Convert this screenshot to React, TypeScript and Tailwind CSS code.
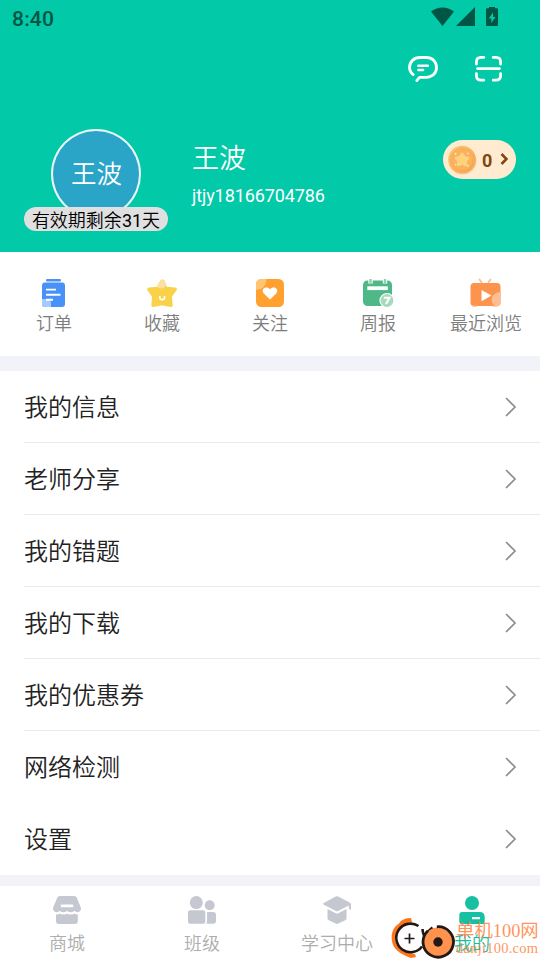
import React from 'react'

const menuRows = ['我的信息', '老师分享', '我的错题', '我的下载', '我的优惠券', '网络检测', '设置']

function StatusBar() {
    return (
        <div className="flex h-9 items-center justify-between pl-3 pr-[42px] text-[#005544]">
            <span className="pt-0.5 font-['Roboto',sans-serif] text-[21px] font-medium leading-9 tracking-[0.2px]">8:40</span>
            <svg width="68" height="20" viewBox="0 0 68 20" fill="currentColor" className="-mt-0.5">
                <path d="M1 4.6Q12.5-3.6 24 4.6L12.5 19Z" />
                <path d="M26 19 45 0V19Z" />
                <path fillRule="evenodd" d="M59 0h6v1.2h2Q68 1.2 68 2.4V18Q68 19 67 19H57Q56 19 56 18V2.4Q56 1.2 57 1.2h2ZM63 5.5l-4.3 6h2.6V16l4.2-6H63Z" />
            </svg>
        </div>
    )
}

function ChatIcon() {
    return (
        <svg width="30" height="27" viewBox="0 0 30 27" fill="none" stroke="#fff" strokeWidth="2.8" strokeLinecap="round" strokeLinejoin="round">
            <path d="M5.2 18.6C2.8 16.8 1.5 14.4 1.5 11.6 1.5 5.8 6 1.5 12 1.5h6.2c6 0 10.3 4.2 10.3 10s-4.3 9.8-10.3 9.8H11.5L8.8 24.6" />
            <path d="M10.3 9.7h9.6M10.3 14h4.8" strokeWidth="2.4" />
        </svg>
    )
}

function ScanIcon() {
    return (
        <svg width="27" height="26" viewBox="0 0 27 26" fill="none" stroke="#fff" strokeWidth="2.8" strokeLinecap="round">
            <path d="M8.8 1.4H6Q1.4 1.4 1.4 6v2M18.2 1.4H21q4.6 0 4.6 4.6v2M8.8 24.2H6q-4.6 0-4.6-4.6v-2M18.2 24.2H21q4.6 0 4.6-4.6v-2" />
            <path d="M2.5 12.6h22" strokeWidth="2.6" />
        </svg>
    )
}

function CoinIcon() {
    return (
        <svg width="30" height="30" viewBox="0 0 30 30">
            <defs>
                <linearGradient id="coin" x1="0" y1="0" x2="1" y2="1">
                    <stop offset="0" stopColor="#ffc774" />
                    <stop offset="1" stopColor="#f9a144" />
                </linearGradient>
            </defs>
            <circle cx="14.6" cy="15.8" r="13.8" fill="#eecb9c" />
            <circle cx="14" cy="14.5" r="13.8" fill="url(#coin)" />
            <circle cx="14" cy="14.5" r="11.2" fill="#fab160" stroke="#eda654" strokeWidth=".6" />
            <path d="m14 9.2 2 3.3 3.8.7-2.6 2.8.6 3.8-3.8-1.7-3.7 1.7.5-3.8-2.6-2.8 3.8-.7Z" fill="#ffd27c" stroke="#ffd27c" strokeWidth="3" strokeLinejoin="round" />
            <path d="M6.5 8.8h2M7.5 7.8v2M19.2 8.5h1.6M20 7.7v1.6M6.8 19.6h1.6M7.6 18.8v1.6M19 20.8h1.8M19.9 19.9v1.8" stroke="#ffe6b4" />
        </svg>
    )
}

function Header() {
    return (
        <header className="h-[252px] bg-[#02c9a7]">
            <StatusBar />
            <div className="flex justify-end gap-[37px] pr-[38px] pt-5">
                <ChatIcon />
                <ScanIcon />
            </div>
            <div className="flex pl-6 pr-6 pt-[46px]">
                <div className="flex w-36 flex-col items-center">
                    <div className="flex size-[90px] items-center justify-center rounded-full border-2 border-white/90 bg-[#2aa5c8] pb-[3px] pl-px text-[25.5px] text-white">王波</div>
                    <div className="relative -mt-3 flex h-6 w-full items-center justify-center rounded-full bg-[#e0e0e0] text-[18px] text-black">
                        有效期剩余<span className="pt-0.5 font-['Roboto',sans-serif] font-normal">31</span>天
                    </div>
                </div>
                <div className="ml-6 flex-1 pt-2 text-white">
                    <div className="text-[27px] leading-[40px]">王波</div>
                    <div className="mt-1.5 font-['Roboto',sans-serif] text-[18px] font-normal leading-[26px] tracking-[-0.1px]">jtjy18166704786</div>
                </div>
                <div className="mt-[11px] flex h-[39px] w-[73px] items-center rounded-full bg-[#ffecd0] pl-[5px] text-[#834511]">
                    <CoinIcon />
                    <span className="ml-1 pt-0.5 font-['Roboto',sans-serif] text-[18px] font-bold leading-none">0</span>
                    <svg width="8" height="12" viewBox="0 0 8 12" fill="none" stroke="currentColor" strokeWidth="2.6" className="-mt-0.5 ml-2">
                        <path d="m1.5 1 5 5-5 5" />
                    </svg>
                </div>
            </div>
        </header>
    )
}

const shortcuts = [
    {
        label: '订单',
        icon: (
            <>
                <rect x="7" y="0" width="15" height="2.6" rx="1.3" fill="#4791f8" />
                <rect x="3" y="3.5" width="23" height="24.5" rx="3" fill="#4791f8" />
                <path d="M3 20h4.5q4.5 0 4.5 4.5V28H6q-3 0-3-3Z" fill="#a6cafd" />
                <path d="M7 10.6h10M7 15.7h14.5M7 20.7h7" stroke="#fff" strokeWidth="1.9" />
            </>
        ),
    },
    {
        label: '收藏',
        icon: (
            <>
                <path d="m15 2.5 4.2 7 9 .8-5 7 .8 9-9-1.7-9 1.7.8-9-5-7 9-.8Z" fill="#f9d24a" stroke="#f9d24a" strokeWidth="3.4" strokeLinejoin="round" />
                <path d="M10.2 8Q12.4-.2 15.8.2q2 .4 3.3 4.2-.6 4.8-4.5 5-3.6 0-4.4-1.4Z" fill="#fbe0a0" />
                <path d="M12.8 17v1.2a2.4 2.4 0 0 0 4.8 0V17" fill="none" stroke="#fff" strokeWidth="1.6" />
            </>
        ),
    },
    {
        label: '关注',
        icon: (
            <>
                <rect x="1" y="0" width="28" height="28" rx="5.5" fill="#ffa02f" />
                <path d="M1 11V5.5Q1 0 6.5 0h5Q11 10.5 1 11Z" fill="#ffc474" />
                <path d="m15 20.5-6-5.8c-4.2-5 2.8-8.4 6-4.4 3.2-4 10.2-.6 6 4.4Z" fill="#fff" />
            </>
        ),
    },
    {
        label: '周报',
        icon: (
            <>
                <rect x="0" y="1.5" width="29" height="25.5" rx="4.5" fill="#4eb886" />
                <path d="M7.5 0v4.5M22 0v4.5" stroke="#fff" strokeWidth="4.4" />
                <path d="M7.5 0v4M22 0v4" stroke="#91d1b2" strokeWidth="2.4" />
                <path d="M4.3 9.2h20.5" stroke="#fff" strokeWidth="3.8" />
                <circle cx="24" cy="21.5" r="7" fill="#a5dabf" stroke="#fff" strokeWidth="1.2" />
                <path d="M20.8 18.7h5.8L23 25" fill="none" stroke="#fff" strokeWidth="2" />
            </>
        ),
    },
    {
        label: '最近浏览',
        icon: (
            <>
                <path d="m8.100 0 2.8 3.7M19.9 0l-2.8 3.7" stroke="#fcba90" strokeWidth="1.8" />
                <rect x="-.5" y="4" width="30" height="23" rx="3.5" fill="#fc944d" />
                <path d="M1.5 26.5H6v1.2H1.5ZM21.5 26.5h5v1.2h-5Z" fill="#fcba90" />
                <path d="M29.5 13q-8.8.8-8.8 8.2 0 3.200 3 5.8H26q3.5 0 3.5-3.5Z" fill="#fdbd95" />
                <path d="M10.5 11v11.2l10-5.6Z" fill="#fff" />
            </>
        ),
    },
]

function Shortcuts() {
    return (
        <nav className="grid h-[104px] grid-cols-5 bg-white pt-[27px]">
            {shortcuts.map((item) => (
                <div key={item.label} className="flex flex-col items-center">
                    <svg width="30" height="30" viewBox="0 0 30 30" className="overflow-visible">{item.icon}</svg>
                    <span className="text-[18px] leading-[26px] text-[#7d7d7d]">{item.label}</span>
                </div>
            ))}
        </nav>
    )
}

function MenuList() {
    return (
        <ul className="mt-[15px] bg-white pl-6">
            {menuRows.map((label, i) => (
                <li key={label} className={`flex h-[72px] items-center justify-between pr-6 text-[24px] text-[#222] ${i < 5 ? 'border-b border-[#e9e9ec]' : ''}`}>
                    <span className="pb-0.5 leading-9">{label}</span>
                    <svg width="11" height="20" viewBox="0 0 11 20" fill="none" stroke="#8f8f8f" strokeWidth="1.7">
                        <path d="m1 1 9 9-9 9" />
                    </svg>
                </li>
            ))}
        </ul>
    )
}

const tabs = [
    {
        label: '商城',
        icon: (
            <>
                <path fillRule="evenodd" d="M7 0h14q2 0 2.8 1.8L28 12q0 4-3.5 4.2-1.8 0-3.2-1.4-1.5 1.6-3.6 1.5-2.2 0-3.7-1.5-1.5 1.6-3.7 1.5-2.1 0-3.6-1.5-1.4 1.5-3.2 1.4Q0 16 0 12L4.2 1.8Q5 0 7 0Zm.8 8.4v2.8h12.4V8.4Z" />
                <path d="M3 18.3q2 .5 3.6-.8 1.8 1.3 3.7.8 2 .5 3.7-.8 1.8 1.3 3.7.8 2 .5 3.7-.8 1.6 1.3 3.4.8V25q0 3-3 3H6q-3 0-3-3Z" />
            </>
        ),
    },
    {
        label: '班级',
        icon: (
            <>
                <circle cx="8.3" cy="6.6" r="6.5" />
                <circle cx="21.7" cy="9.3" r="5" />
                <rect x="0" y="14.2" width="17.3" height="13.6" rx="2.6" />
                <path d="M18.8 16H25q3 0 3 3v6q0 2.8-3 2.8h-6.8q.9-1.2.9-3V18q0-1.2-.3-2Z" />
            </>
        ),
    },
    {
        label: '学习中心',
        icon: (
            <>
                <path d="M12.8.5q1.2-.6 2.4 0L27 6.8q1 .5 1 1.5V14l-2.2-1.2V9.6L15 15q-1 .5-2 0L.8 8.8Q-.5 7.8.8 7Z" />
                <path d="m4.5 13 8.2 4.2q1.3.6 2.6 0L23.5 13v9.500q0 1.2-1.2 1.8l-7 3.3q-1.3.6-2.6 0l-7-3.3q-1.2-.6-1.2-1.8Z" />
            </>
        ),
    },
    {
        label: '我的',
        icon: (
            <>
                <circle cx="14" cy="7" r="7" />
                <path fillRule="evenodd" d="M4.3 16h17.4q5 0 5 5v4.2q0 2.8-2.8 2.8H4.1q-2.8 0-2.8-2.8V19q0-3 3-3Zm9.7 5v2.2h8V21Z" />
            </>
        ),
    },
]

function Watermark() {
    return (
        <div className="absolute bottom-0 right-0 flex h-[43px] w-[150px]">
            <svg width="65" height="43" viewBox="0 0 65 43" fill="none">
                <path d="M21 1Q12 1 9 6.500C2 11 1 18 2 24c1 8 8 13 19 17l5-1-1-3C10 35 4 27 5 20 6 12 14 6 22 5Z" fill="#ff7518" />
                <path d="M28.5 9A14.300 14.300 0 1 0 32 29.5" fill="#fff" stroke="#231815" strokeWidth="2.6" />
                <path d="M19.5 16.5v10M14.5 21.5h10" stroke="#231815" strokeWidth="1.7" />
                <path d="M32.500 12q.5 7 3.500 9M34.500 18l8-7.5" stroke="#231815" strokeWidth="2.6" />
                <circle cx="48" cy="25" r="14.5" fill="#ff924c" />
                <path d="M46.8 9.8A15.2 15.2 0 1 1 38 13.7" stroke="#231815" strokeWidth="2.8" />
                <circle cx="48" cy="25" r="4.7" fill="#231815" />
            </svg>
            <div className="flex flex-col whitespace-nowrap pl-px pt-0.5 font-normal text-[#ff7f3b]/85">
                <span className="font-['Liberation_Serif','Noto_Sans_CJK_SC',serif] text-[18.4px] leading-[24px]">单机100网</span>
                <span className="-mt-[3px] font-['Liberation_Serif',serif] text-[14.5px] leading-[17px] tracking-[0.25px]">danji100.com</span>
            </div>
        </div>
    )
}

function TabBar() {
    return (
        <footer className="relative mt-[11px] grid h-[74px] grid-cols-4 bg-white pt-[10px]">
            {tabs.map((tab) => (
                <div key={tab.label} className={`flex flex-col items-center pr-px ${tab.label === '我的' ? 'text-[#16c0a0]' : 'text-[#adadad]'}`}>
                    <svg width="28" height="28" viewBox="0 0 28 28" fill={tab.label === '我的' ? '#16c0a0' : '#c5c7d1'}>{tab.icon}</svg>
                    <span className="mt-[5px] text-[18px] leading-[26px]">{tab.label}</span>
                </div>
            ))}
            <Watermark />
        </footer>
    )
}

export default function App() {
    return (
        <div className="h-[960px] w-[540px] overflow-hidden bg-[#f2f3f8] font-['Noto_Sans_CJK_SC_DemiLight','Noto_Sans_CJK_SC_Light','Noto_Sans_CJK_SC',sans-serif] font-light">
            <Header />
            <Shortcuts />
            <MenuList />
            <TabBar />
        </div>
    )
}
